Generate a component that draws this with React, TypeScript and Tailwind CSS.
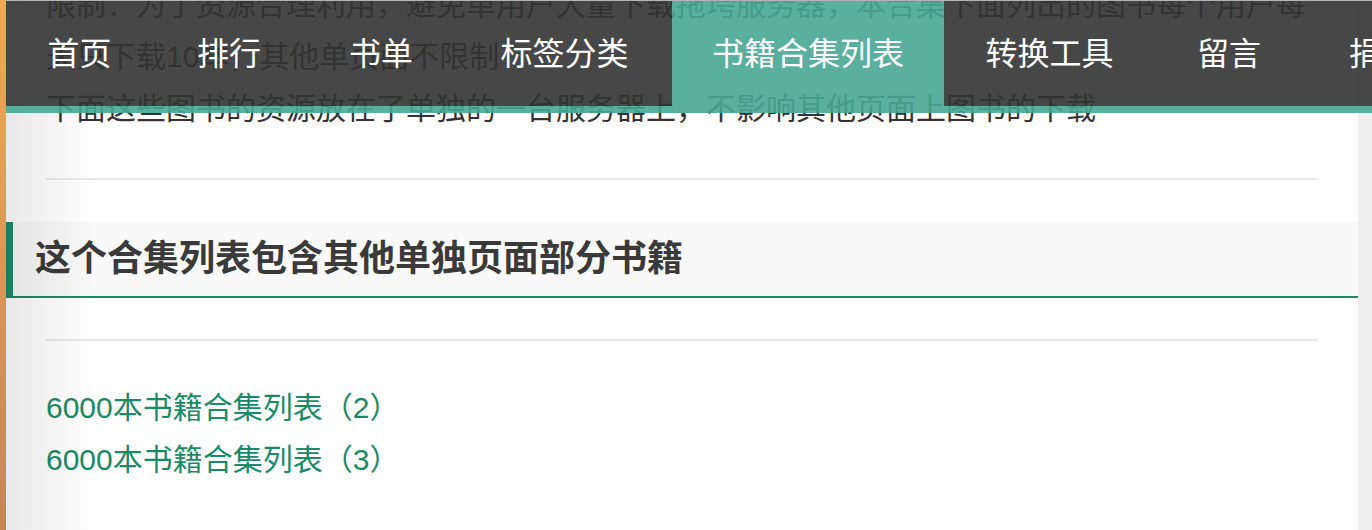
import React from 'react';

// ─── Nav data ────────────────────────────────────────────────────
interface NavItem {
  label: string;
  width: string;
  active?: boolean;
}

const NAV: NavItem[] = [
  { label: '首页', width: 'w-[147px]' },
  { label: '排行', width: 'w-[152px]' },
  { label: '书单', width: 'w-[152px]' },
  { label: '标签分类', width: 'w-[215px]' },
  { label: '书籍合集列表', width: 'w-[272px]', active: true },
  { label: '转换工具', width: 'w-[211px]' },
  { label: '留言', width: 'w-[148px]' },
  { label: '捐赠', width: 'w-[156px]' },
];

const LINKS = ['6000本书籍合集列表（2）', '6000本书籍合集列表（3）'];

const FONT = "font-['Liberation_Sans','Noto_Sans_CJK_SC',sans-serif]";

function TopNav() {
  return (
    <nav className="absolute top-0 left-[6px] right-0 z-20 border-t border-[#b4b4b4] overflow-hidden">
      <div className="flex items-start w-max">
        {NAV.map((item) =>
          item.active ? (
            <a
              key={item.label}
              href="#"
              className={`${item.width} shrink-0 h-[112px] pb-[7px] flex items-center justify-center bg-[#48a695]/90 text-white text-[32px]`}
            >
              {item.label}
            </a>
          ) : (
            <div key={item.label} className={`${item.width} shrink-0 flex flex-col`}>
              <a
                href="#"
                className="h-[105px] flex items-center justify-center bg-[#333333]/90 text-white text-[32px]"
              >
                {item.label}
              </a>
              <div className="h-[7px] bg-[#48a695]/90" />
            </div>
          )
        )}
      </div>
    </nav>
  );
}

export default function App() {
  return (
    <div className={`relative w-[1372px] h-[530px] overflow-hidden bg-white flex ${FONT}`}>
      {/* left sidebar edge */}
      <div className="w-[6px] shrink-0 bg-gradient-to-b from-[#f2a948] to-[#c88458]" />

      <main className="relative flex-1 bg-white overflow-hidden">
        <div
          className="absolute inset-y-0 left-0 w-[90px] bg-gradient-to-r from-black/[0.09] to-transparent pointer-events-none z-10"
          aria-hidden="true"
        />

        <div className="px-[40px]">
          <p className="-mt-[21px] text-[30px] leading-[52px] text-[#333]">
            限制：为了资源合理利用，避免单用户大量下载拖垮服务器，本合集下面列出的图书每个用户每天只下载10本，其他单页面不限制
            <br />
            下面这些图书的资源放在了单独的一台服务器上，不影响其他页面上图书的下载
          </p>

          <hr className="mt-[43px] h-[2px] border-0 bg-[#e8e8e8]" />

          <h2 className="-mx-[40px] mt-[42px] h-[76px] flex items-center pl-[22px] bg-[#f9f9f9] border-l-[7px] border-b-2 border-[#1b8a66] text-[36px] font-bold text-[#3a3a3a]">
            这个合集列表包含其他单独页面部分书籍
          </h2>

          <hr className="mt-[41px] h-[2px] border-0 bg-[#e8e8e8]" />

          <ul className="mt-[41px]">
            {LINKS.map((link) => (
              <li key={link}>
                <a href="#" className="text-[30px] leading-[52px] text-[#1b8a66]">
                  {link}
                </a>
              </li>
            ))}
          </ul>
        </div>
      </main>

      {/* right scroll gutter */}
      <div className="w-[14px] shrink-0 bg-[#efefef]" />

      <TopNav />
    </div>
  );
}
